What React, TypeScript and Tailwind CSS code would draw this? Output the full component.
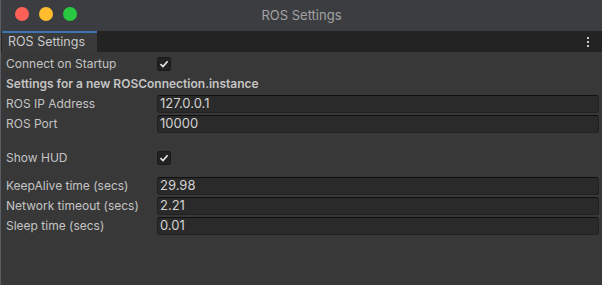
const font = { fontFamily: 'Inter, "Noto Sans", sans-serif' };

function Check() {
  return (
    <div className="flex h-[14px] w-[14px] items-center justify-center rounded-[2px] border border-[#1a1a1a] bg-[#222222]">
      <svg width="10" height="10" viewBox="0 0 10 10">
        <path d="M1.5 5.2 L4 7.6 L8.6 2.2" fill="none" stroke="#e8e8e8" strokeWidth="1.6" />
      </svg>
    </div>
  );
}

function Row({ label, children }: { label: string; children: React.ReactNode }) {
  return (
    <div className="flex h-5 items-center">
      <div className="w-[156px] shrink-0 pl-[5px] text-[12px] text-[#c4c4c4]">{label}</div>
      {children}
    </div>
  );
}

function Field({ value }: { value: string }) {
  return (
    <div className="mr-[3px] flex h-[18px] flex-1 items-center rounded-[3px] border border-[#212121] border-t-[#0f0f0f] bg-[#2a2a2a] pl-[2px] text-[13px] text-[#d2d2d2]">
      {value}
    </div>
  );
}

export default function App() {
  return (
    <div className="flex h-[285px] w-[602px] flex-col overflow-hidden bg-[#383838]" style={font}>
      <div className="relative flex h-[31px] shrink-0 items-center justify-center border-l border-[#5a5d63] bg-[#3c3d41]">
        <div className="absolute left-[14px] top-[7px] flex gap-[10px]">
          <span className="h-[14px] w-[14px] rounded-full bg-[#fe5f57]" />
          <span className="h-[14px] w-[14px] rounded-full bg-[#febc2e]" />
          <span className="h-[14px] w-[14px] rounded-full bg-[#28c840]" />
        </div>
        <span className="text-[13px] text-[#a3a3a3]">ROS Settings</span>
      </div>
      <div className="flex h-[21px] shrink-0 items-stretch border-l border-[#5a5d63] bg-[#232323]">
        <div className="ml-[1px] flex w-[95px] items-center border-t-2 border-[#3c74b5] bg-[#3a3a3a] pl-[6px] text-[12.5px] text-[#c8c8c8]">
          ROS Settings
        </div>
        <div className="flex-1" />
        <div className="flex w-[24px] flex-col items-center justify-center gap-[2px] pr-[4px]">
          <span className="h-[2px] w-[2px] bg-[#c8c8c8]" />
          <span className="h-[2px] w-[2px] bg-[#c8c8c8]" />
          <span className="h-[2px] w-[2px] bg-[#c8c8c8]" />
        </div>
      </div>
      <div className="flex flex-1 flex-col border-l border-[#5a5d63] pt-[2px]">
        <Row label="Connect on Startup">
          <Check />
        </Row>
        <div className="flex h-5 items-center pl-[5px] text-[12px] font-semibold text-[#c4c4c4]">
          Settings for a new ROSConnection.instance
        </div>
        <Row label="ROS IP Address">
          <Field value="127.0.0.1" />
        </Row>
        <Row label="ROS Port">
          <Field value="10000" />
        </Row>
        <div className="h-[14px]" />
        <Row label="Show HUD">
          <Check />
        </Row>
        <div className="h-[8px]" />
        <Row label="KeepAlive time (secs)">
          <Field value="29.98" />
        </Row>
        <Row label="Network timeout (secs)">
          <Field value="2.21" />
        </Row>
        <Row label="Sleep time (secs)">
          <Field value="0.01" />
        </Row>
      </div>
    </div>
  );
}
